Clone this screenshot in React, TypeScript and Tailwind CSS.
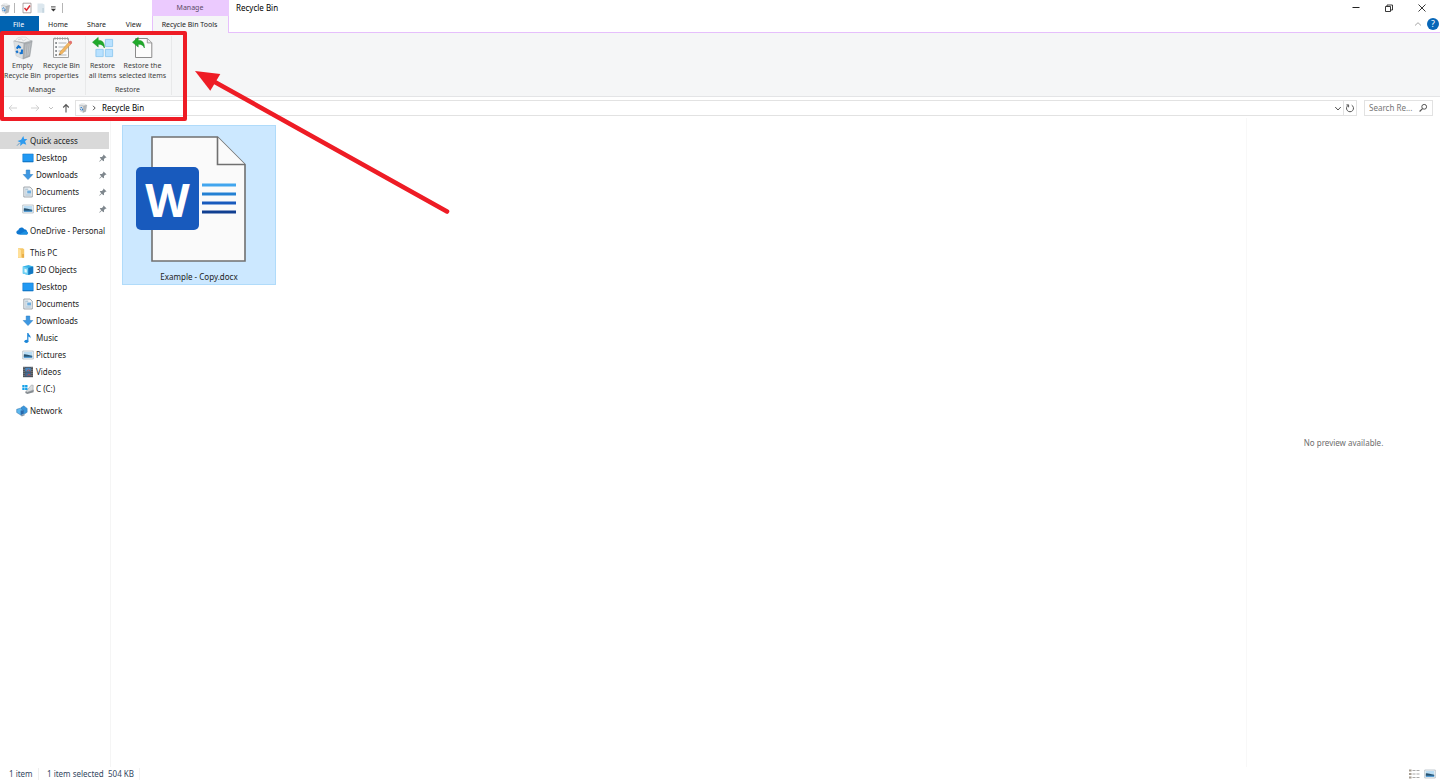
import type { ReactNode } from "react";

type IconProps = { className?: string };

function BinIcon({ className = "size-6" }: IconProps) {
  return (
    <svg viewBox="0 0 24 24" className={className} aria-hidden="true">
      <path d="M2.600 5 13 7.500 12 23l-7-3.200z" fill="#dde0e2" stroke="#c3c7ca" strokeWidth=".5" />
      <path d="M13 7.500 21.200 4.800 18.800 20.400 12 23z" fill="#a9adb1" stroke="#93989c" strokeWidth=".5" />
      <path d="M2.600 5 9 2.600l12.200 2.200L13 7.500z" fill="#92979b" />
      <path d="m4 5 2.600-3.200L11 .9l4 .3 4.500 3.700-6.200 1.600z" fill="#f2f3f4" stroke="#c5c8cb" strokeWidth=".5" />
      <path d="m7 3.800 3.500-1 1.800 2.200 3-1.800" fill="none" stroke="#c5c9cc" strokeWidth=".7" />
      <path d="m15 8.500-.9 12.500M17.200 7.800l-1.200 12.300M19.200 7.200l-1.600 12" stroke="#cfd2d4" strokeWidth=".6" />
      <path
        d="m5.700 12.600 1.800-2.300 2.200 1.700M11 13.500l-.2 3.500-2.200.3M6.700 16.900l-1.300-2.200"
        fill="none"
        stroke="#1272cf"
        strokeWidth="2.100"
      />
    </svg>
  );
}

function PropertiesIcon() {
  return (
    <svg viewBox="0 0 24 24" className="size-6" aria-hidden="true">
      <path d="M3.500 2.500h15v19h-15z" fill="#fafafa" stroke="#a3a3a3" />
      <path d="M5 1.200v2.600M7.500 1.200v2.600M10 1.200v2.600M12.500 1.200v2.600M15 1.200v2.600M17.500 1.200v2.600" stroke="#9a9a9a" strokeWidth=".8" />
      <path d="M8.500 7h8M8.500 11h8M8.500 15h8M8.500 19h8" stroke="#aeb4b8" strokeWidth="1.100" />
      <path d="M5.200 7h1.800M5.200 11h1.800M5.200 15h1.800M5.200 19h1.800" stroke="#6d7377" strokeWidth="1.700" />
      <path d="m9.200 19 1-3.200L19.500 5.400l2.100 1.900-9.300 10.300z" fill="#f2b660" stroke="#c98d3c" strokeWidth=".5" />
      <path d="m18.500 6.500 1.300-1.500c1-.9 3 .8 2.100 1.900l-1.300 1.500z" fill="#e37272" />
      <path d="m9.200 19 .5-1.600 1.100 1z" fill="#484848" />
    </svg>
  );
}

const undoPath = "M0.500 5.200 6.200.4v2.800c4 .1 6.400 2.300 6.200 7.800-1.200-2.800-2.900-3.900-6.200-3.800v2.900z";

function RestoreAllIcon() {
  return (
    <svg viewBox="0 0 24 24" className="size-6" aria-hidden="true">
      <path
        d="M14.400 3.400h7.200v7.200h-7.200zM4.900 13.400h7.300v7.200H4.900zM14.400 13.400h7.200v7.200h-7.200z"
        fill="#b8e1ff"
        stroke="#86c4ee"
        strokeWidth=".8"
      />
      <path d={undoPath} transform="translate(1 1)" fill="#21aa2b" stroke="#138c20" strokeWidth=".5" />
    </svg>
  );
}

function RestoreSelectedIcon() {
  return (
    <svg viewBox="0 0 24 24" className="size-6" aria-hidden="true">
      <path d="M4.500 2.500h12l4.300 4.200v14.800H4.500z" fill="#fcfcfc" stroke="#8b8b8b" />
      <path d="M16.300 2.500v4.400h4.500" fill="#eee" stroke="#8b8b8b" strokeWidth=".8" />
      <path d={undoPath} transform="translate(1 1)" fill="#21aa2b" stroke="#138c20" strokeWidth=".5" />
    </svg>
  );
}

function StarIcon() {
  return (
    <svg viewBox="0 0 12 12" className="size-3" aria-hidden="true">
      <path d="m7.300 1 .9 3.100 3.200-.1-2.400 2.300 1.300 3.500-3.300-1.300-2.800 2.600.2-3.500L1.500 6l3.600-1.200z" fill="#2f9bee" />
      <path d="M1 10.700 3.600 8" stroke="#6f9dc0" />
    </svg>
  );
}

function DesktopIcon() {
  return (
    <svg viewBox="0 0 12 12" className="size-3" aria-hidden="true">
      <path d="M.8 2h10.400v8H.8z" fill="#2199f3" stroke="#1479ca" strokeWidth=".6" />
      <path d="M1 9.500h10" stroke="#0b6cb9" strokeWidth=".6" />
    </svg>
  );
}

function DownloadIcon() {
  return (
    <svg viewBox="0 0 12 12" className="size-3" aria-hidden="true">
      <path d="M4.200 1h3.600v4.500h3L6 10.600 1.200 5.500h3z" fill="#3c97e2" stroke="#1f76bf" strokeWidth=".5" />
    </svg>
  );
}

function DocumentIcon() {
  return (
    <svg viewBox="0 0 12 12" className="size-3" aria-hidden="true">
      <path d="M1.800 1h6.200l2.300 2.200V11H1.800z" fill="#edf1f4" stroke="#8d969d" strokeWidth=".8" />
      <path d="M3.200 3.200h3M3.200 5h1.400M3.200 7h1.400M3.200 9h5.600" stroke="#88a9c2" strokeWidth=".8" />
      <path d="M5.200 4.500H9v3H5.200z" fill="#6faede" />
    </svg>
  );
}

function PictureIcon() {
  return (
    <svg viewBox="0 0 12 12" className="size-3" aria-hidden="true">
      <path d="M.7 2h10.600v8H.7z" fill="#f5f8fa" stroke="#9caab4" strokeWidth=".6" />
      <path d="M1.800 3h8.400v5.800H1.800z" fill="#b9ddf5" />
      <path d="M1.800 5.400c2-.6 3.900.9 8.400 1.400v1.200H1.800z" fill="#28526f" />
      <path d="M1.800 7.600h8.400v1.200H1.800z" fill="#3d8dca" />
    </svg>
  );
}

function CloudIcon() {
  return (
    <svg viewBox="0 0 12 12" className="size-3" aria-hidden="true">
      <path d="M3 9.600C-.3 9.600-.5 5.600 2.300 5.200 3 2.300 6.600 1.400 8.300 4.200c2 .1 2.600 1.400 2.700 2.200 1.500.9.9 3.200-.8 3.200z" fill="#0f77d0" />
      <path d="m3.200 9.600 5-3.200c1-.5 2.300-.2 2.800.3 1.300.8.8 2.900-.8 2.900z" fill="#1c8fe0" />
    </svg>
  );
}

function PcIcon() {
  return (
    <svg viewBox="0 0 12 12" className="size-3" aria-hidden="true">
      <path d="M2 1.200h4.800l1.400 1v8.600H2z" fill="#f6c869" />
      <path d="M2 1.200 5 3v8l-3-1z" fill="#ffe09a" />
      <path d="M6.300 7h1.500v3.800H6.300z" fill="#e4a63f" />
    </svg>
  );
}

function CubeIcon() {
  return (
    <svg viewBox="0 0 12 12" className="size-3" aria-hidden="true">
      <path d="M.8 2.600 6.500 1l4.700 1.500v6.800L6.300 11 .8 9.500z" fill="#38b3e8" />
      <path d="m.8 2.600 5.500 1.500V11L.8 9.500z" fill="#6fd0f3" />
      <path d="M6.300 4.100 11.200 2.500v6.800L6.300 11z" fill="#1478c2" />
      <path d="m2.500 4.800 2.300.6v3.400l-2.300-.6z" fill="#e6faff" />
    </svg>
  );
}

function MusicIcon() {
  return (
    <svg viewBox="0 0 12 12" className="size-3" aria-hidden="true">
      <ellipse cx="4.400" cy="9.300" rx="2" ry="1.600" fill="#1c86d8" />
      <path d="M5.200 9.200V1h1.200c.2 1.800 2.900 2.300 2 5.600-.2-1.400-1-2-2-2.200v4.800z" fill="#1c86d8" />
    </svg>
  );
}

function VideoIcon() {
  return (
    <svg viewBox="0 0 12 12" className="size-3" aria-hidden="true">
      <path d="M1 .8h10v10.400H1z" fill="#46494e" />
      <path d="M2 1.200v9.800M10 1.200v9.800" stroke="#a9acb0" strokeDasharray="1 1" />
      <path d="M3.200 1.600h5.600v4H3.200z" fill="#4c87bd" />
      <path d="M3.200 6.400h5.600v4H3.200z" fill="#466a92" />
      <path d="m5 5.200 1.500-1.500 1.800 1.500M5.500 9.800 7 8l1.300 1.800" fill="none" stroke="#b84e48" />
    </svg>
  );
}

function DriveIcon() {
  return (
    <svg viewBox="0 0 12 12" className="size-3" aria-hidden="true">
      <path d="M3.500 8.500 10.800 6l.8 1.200v2L5.300 11l-2-1z" fill="#858b90" />
      <path d="M4 8.500 9.400 2l1.800.3-.2 4.900-5.700 2z" fill="#d9dcde" stroke="#8e9499" strokeWidth=".5" />
      <path d="M.3 2h2.300v2.200H.3zM3.100 2h2.400v2.200H3.100zM.3 4.700h2.300v2.200H.3zM3.100 4.700h2.400v2.200H3.100z" fill="#16a1e9" />
    </svg>
  );
}

function NetworkIcon() {
  return (
    <svg viewBox="0 0 12 12" className="size-3" aria-hidden="true">
      <path d="m5 2.500 2.800-1.700 3.400 2.600v3.800L8.500 9 5 6.800z" fill="#3b96db" stroke="#2d73ac" strokeWidth=".4" />
      <path d="m.7 4.300 3.600-1.100 3.200 2v3.600L4.700 10 .7 7.500z" fill="#5db8ef" stroke="#2c6fa8" strokeWidth=".5" />
      <path d="m4.500 10.400 3.200-1.300 1.400.8-3.200 1.500z" fill="#7f94a8" />
      <path d="m4.600 5.500 2.900-.3v3.600L4.700 10z" fill="#2a69ac" />
    </svg>
  );
}

function PinIcon() {
  return (
    <svg viewBox="0 0 10 10" className="size-2" aria-hidden="true">
      <path d="m5.700.5 3.800 3.800-1.100.5-.5-.1-1.700 1.700.1 1.900-.9.700-1.900-1.900L.8 9.700l-.5-.5 2.600-2.700L1 4.600l.7-.9 1.900.1 1.700-1.700-.1-.5z" fill="#7f878d" />
    </svg>
  );
}

type NavEntry = { label: string; icon: ReactNode; pinned?: boolean };
type NavGroup = { head: NavEntry; children: NavEntry[]; selected?: boolean };

const navGroups: NavGroup[] = [
  {
    head: { label: "Quick access", icon: <StarIcon /> },
    selected: true,
    children: [
      { label: "Desktop", icon: <DesktopIcon />, pinned: true },
      { label: "Downloads", icon: <DownloadIcon />, pinned: true },
      { label: "Documents", icon: <DocumentIcon />, pinned: true },
      { label: "Pictures", icon: <PictureIcon />, pinned: true },
    ],
  },
  { head: { label: "OneDrive - Personal", icon: <CloudIcon /> }, children: [] },
  {
    head: { label: "This PC", icon: <PcIcon /> },
    children: [
      { label: "3D Objects", icon: <CubeIcon /> },
      { label: "Desktop", icon: <DesktopIcon /> },
      { label: "Documents", icon: <DocumentIcon /> },
      { label: "Downloads", icon: <DownloadIcon /> },
      { label: "Music", icon: <MusicIcon /> },
      { label: "Pictures", icon: <PictureIcon /> },
      { label: "Videos", icon: <VideoIcon /> },
      { label: "C (C:)", icon: <DriveIcon /> },
    ],
  },
  { head: { label: "Network", icon: <NetworkIcon /> }, children: [] },
];

function NavigationPane() {
  return (
    <nav aria-label="Folders" className="flex w-[111px] shrink-0 flex-col gap-[5px] border-r border-[#f5f5f5] pt-3.5 pr-px">
      {navGroups.map((group) => (
        <ul key={group.head.label}>
          <li>
            <button
              type="button"
              className={
                group.selected
                  ? "flex h-[17px] w-full items-center gap-0.5 bg-[#d9d9d9] pl-4 whitespace-nowrap"
                  : "flex h-[17px] w-full items-center gap-0.5 pl-4 whitespace-nowrap"
              }
            >
              {group.head.icon}
              {group.head.label}
            </button>
          </li>
          {group.children.map((item) => (
            <li key={item.label}>
              <button type="button" className="flex h-[17px] w-full items-center gap-0.5 pr-0.5 pl-[22px] whitespace-nowrap">
                {item.icon}
                <span className="flex-1 text-left">{item.label}</span>
                {item.pinned && <PinIcon />}
              </button>
            </li>
          ))}
        </ul>
      ))}
    </nav>
  );
}

function TitleBar() {
  return (
    <header className="flex h-[33px] shrink-0 bg-white">
      <div className="flex w-[152px] flex-col">
        <div className="flex h-4 items-center">
          <BinIcon className="size-[11px]" />
          <span className="ml-[3px] h-2.5 w-px bg-[#b5b5b5]" />
          <button type="button" aria-label="Properties" className="ml-1.5">
            <svg viewBox="0 0 12 12" className="size-3">
              <path d="M2 1.200h8v9.600H2z" fill="#fff" stroke="#9b8d8d" strokeWidth=".8" />
              <path d="m3.500 6 2 2.200L9 3.500" fill="none" stroke="#dc2f36" strokeWidth="1.500" />
            </svg>
          </button>
          <button type="button" aria-label="New folder" className="ml-0.5">
            <svg viewBox="0 0 12 12" className="size-3">
              <path d="M2.500 1.500h5l2 1v8.300h-7z" fill="#dce7ee" />
              <path d="M7.300 6h1.600v4.800H7.300z" fill="#c3d4de" />
            </svg>
          </button>
          <button type="button" aria-label="Customize toolbar" className="ml-px">
            <svg viewBox="0 0 10 10" className="size-2.5">
              <path d="M3 3.900h4.600" stroke="#444" />
              <path d="M2.800 5.800H8L5.400 8.500z" fill="#333" />
            </svg>
          </button>
          <span className="ml-1 h-2.5 w-px bg-[#b5b5b5]" />
        </div>
        <div className="flex h-[17px] items-center text-[7px] leading-4">
          <button type="button" className="h-[17px] w-[39px] bg-[#0063b1] pr-0.5 text-white">
            File
          </button>
          <button type="button" className="w-[38px]">Home</button>
          <button type="button" className="w-[39px]">Share</button>
          <button type="button" className="flex-1 pr-px">View</button>
        </div>
      </div>
      <div className="flex w-[77px] flex-col text-center text-[7px]">
        <div className="h-4 bg-[#ebcafe] pr-px leading-4 text-[#5b4a66]">Manage</div>
        <button type="button" className="h-[17px] border-x border-[#e6bffc] bg-[#f5f6f7] pr-0.5 leading-4 whitespace-nowrap">
          Recycle Bin Tools
        </button>
      </div>
      <div className="flex flex-1 items-start justify-between border-b border-[#e6bffc]">
        <h1 className="pl-[7px] leading-4 text-black">Recycle Bin</h1>
        <div className="flex flex-col items-end">
          <div className="flex h-4 items-center gap-[21px] pr-3">
            <button type="button" aria-label="Minimize">
              <svg viewBox="0 0 12 12" className="size-3">
                <path d="M2.500 5.500h7" stroke="#222" />
              </svg>
            </button>
            <button type="button" aria-label="Restore">
              <svg viewBox="0 0 12 12" className="size-3">
                <path d="M2.500 4.500h5v5h-5zM4 4.500V3h5.500v5H7.500" fill="none" stroke="#222" strokeWidth=".9" />
              </svg>
            </button>
            <button type="button" aria-label="Close">
              <svg viewBox="0 0 12 12" className="size-3">
                <path d="m2.500 2.500 7 7m0-7-7 7" stroke="#222" strokeWidth=".9" />
              </svg>
            </button>
          </div>
          <div className="flex h-4 items-center gap-1 pr-px">
            <button type="button" aria-label="Collapse ribbon">
              <svg viewBox="0 0 10 10" className="size-2.5">
                <path d="M2 6.500 5 3.700l3 2.800" fill="none" stroke="#a7a7a7" />
              </svg>
            </button>
            <button type="button" aria-label="Help" className="size-3 rounded-full bg-[#0867b8] text-center text-[9px] leading-3 text-white">
              ?
            </button>
          </div>
        </div>
      </div>
    </header>
  );
}

function RibbonButton({ icon, lines, width }: { icon: ReactNode; lines: [string, string]; width: string }) {
  return (
    <button type="button" className={`flex ${width} flex-col items-center whitespace-nowrap`}>
      {icon}
      <span className="mt-px leading-[10px]">
        {lines[0]}
        <br />
        {lines[1]}
      </span>
    </button>
  );
}

function Ribbon() {
  return (
    <section aria-label="Ribbon" className="flex h-16 shrink-0 border-b border-[#e3e4e6] bg-[#f5f6f7] pt-[3px] pb-px text-[7px] text-[#3c3c3c]">
      <div className="flex w-[86px] flex-col justify-between border-r border-[#e8e9ea]">
        <div className="flex pl-[3px]">
          <RibbonButton icon={<BinIcon />} lines={["Empty", "Recycle Bin"]} width="w-[39px]" />
          <RibbonButton icon={<PropertiesIcon />} lines={["Recycle Bin", "properties"]} width="w-[39px]" />
        </div>
        <span className="pr-px text-center leading-[10px]">Manage</span>
      </div>
      <div className="flex w-[86px] flex-col justify-between border-r border-[#e8e9ea]">
        <div className="flex pl-px">
          <RibbonButton icon={<RestoreAllIcon />} lines={["Restore", "all items"]} width="w-[31px]" />
          <RibbonButton icon={<RestoreSelectedIcon />} lines={["Restore the", "selected items"]} width="w-[49px]" />
        </div>
        <span className="pr-0.5 text-center leading-[10px]">Restore</span>
      </div>
    </section>
  );
}

function AddressRow() {
  return (
    <div className="flex h-[21px] shrink-0 items-center pt-px pr-[7px] pl-[7px]">
      <button type="button" aria-label="Back">
        <svg viewBox="0 0 12 12" className="size-3">
          <path d="M10 6H2m3.200-3L2 6l3.200 3" fill="none" stroke="#ccc" strokeWidth=".9" />
        </svg>
      </button>
      <button type="button" aria-label="Forward" className="ml-2.5">
        <svg viewBox="0 0 12 12" className="size-3">
          <path d="M2 6h8M6.800 3 10 6 6.800 9" fill="none" stroke="#ccc" strokeWidth=".9" />
        </svg>
      </button>
      <button type="button" aria-label="Recent locations" className="ml-1.5">
        <svg viewBox="0 0 8 8" className="size-2">
          <path d="m2 3 2 2 2-2" fill="none" stroke="#bbb" strokeWidth=".9" />
        </svg>
      </button>
      <button type="button" aria-label="Up" className="ml-[5px]">
        <svg viewBox="0 0 12 12" className="size-3">
          <path d="M6 10.500v-8M3.200 5.500 6 2.500l2.800 3" fill="none" stroke="#555" strokeWidth="1.100" />
        </svg>
      </button>
      <div className="ml-[3px] flex h-4 flex-1 items-center border border-[#e2e2e2] bg-white pl-0.5">
        <BinIcon className="size-2.5" />
        <svg viewBox="0 0 8 8" className="ml-0.5 size-2" aria-hidden="true">
          <path d="m3 1.800 2.200 2.200L3 6.200" fill="none" stroke="#555" />
        </svg>
        <a href="#recycle-bin" className="ml-1 flex-1 text-black">
          Recycle Bin
        </a>
        <button type="button" aria-label="Previous locations">
          <svg viewBox="0 0 10 10" className="size-2.5">
            <path d="m2.200 4 2.800 3 2.800-3" fill="none" stroke="#555" />
          </svg>
        </button>
        <button type="button" aria-label="Refresh" className="flex h-full w-[13px] items-center justify-center border-l border-[#e2e2e2]">
          <svg viewBox="0 0 10 10" className="size-2.5">
            <path d="M6.700 2.200A3.500 3.500 0 1 1 3.300 2.200M3.600 4.300V1.900H1.400" fill="none" stroke="#555" />
          </svg>
        </button>
      </div>
      <label className="ml-[7px] flex h-4 w-[69px] items-center border border-[#e2e2e2] pr-1 pl-1">
        <input type="text" aria-label="Search Recycle Bin" placeholder="Search Re..." className="w-full min-w-0 flex-1 outline-none placeholder:text-[#767676]" />
        <svg viewBox="0 0 10 10" className="size-2.5 shrink-0" aria-hidden="true">
          <circle cx="6.200" cy="3.800" r="2.400" fill="none" stroke="#555" />
          <path d="M4.500 5.600 1.600 8.500" stroke="#555" strokeWidth="1.200" />
        </svg>
      </label>
    </div>
  );
}

function WordFileIcon() {
  return (
    <div className="relative h-[126px] w-[126px]">
      <svg viewBox="0 0 126 126" className="size-full" aria-hidden="true">
        <path d="M16 1h65.500L109 28.500V125H16z" fill="#fafafa" stroke="#707070" strokeWidth="1.600" />
        <path d="M81.500 1v27.500H109" fill="#fafafa" stroke="#707070" strokeWidth="1.600" />
        <g strokeWidth="3.200">
          <path d="M66 49h34" stroke="#41a5ee" />
          <path d="M66 58h34" stroke="#2380d3" />
          <path d="M66 67h34" stroke="#185abd" />
          <path d="M66 76h34" stroke="#103f91" />
        </g>
      </svg>
      <span className="absolute top-[31px] left-0 flex size-[63px] items-center justify-center rounded-[5px] bg-[#185abd] font-['Open_Sans','Noto_Sans',sans-serif] text-[46px] leading-none font-bold text-white">
        W
      </span>
    </div>
  );
}

function StatusBar() {
  return (
    <footer className="flex h-[13px] shrink-0 items-center justify-between pr-1 pl-[9px] text-[#33475f]">
      <div className="flex items-center">
        <span className="w-[30px] border-r border-[#eee]">1 item</span>
        <span className="w-[61px] pl-2 whitespace-nowrap">1 item selected</span>
        <span className="w-10 border-r border-[#f2f2f2] pl-2 whitespace-nowrap">504 KB</span>
      </div>
      <div className="flex items-center gap-1">
        <button type="button" aria-label="Details view">
          <svg viewBox="0 0 12 12" className="size-3">
            <path d="M1 2.500h2.500M1 6h2.500M1 9.500h2.500" stroke="#a59c90" strokeWidth="2" />
            <path d="M4.500 2.500h3M4.500 6h3M4.500 9.500h3M8.500 2.500h3M8.500 6h3M8.500 9.500h3" stroke="#aaa" />
          </svg>
        </button>
        <button type="button" aria-label="Large icons view">
          <PictureIcon />
        </button>
      </div>
    </footer>
  );
}

function Callout() {
  return (
    <div aria-hidden="true" className="pointer-events-none absolute top-[31px] left-0 flex items-start">
      <div className="h-[90px] w-[187px] rounded-[2px] border-4 border-[#ee1c25]" />
      <svg viewBox="187 31 270 190" className="h-[190px] w-[270px]">
        <path d="M213 81 447 211.500" stroke="#ee1c25" strokeWidth="4.600" strokeLinecap="round" />
        <path d="m195 71 25.300 3-10 16.800z" fill="#ee1c25" />
      </svg>
    </div>
  );
}

export default function App() {
  return (
    <div className="relative flex h-screen flex-col overflow-hidden bg-white font-['Noto_Sans','Open_Sans',sans-serif] text-[8px] leading-3 text-[#222]">
      <TitleBar />
      <Ribbon />
      <AddressRow />
      <div className="flex min-h-0 flex-1">
        <NavigationPane />
        <main className="flex-1 pt-[7px] pl-[11px]">
          <button type="button" className="flex h-40 w-[154px] flex-col items-center border border-[#b0dbfa] bg-[#cce8ff] pt-2.5">
            <WordFileIcon />
            <span className="mt-[9px]">Example - Copy.docx</span>
          </button>
        </main>
        <aside className="flex w-[194px] items-center justify-center border-l border-[#f8f8f8] text-[#6d6d6d]">
          No preview available.
        </aside>
      </div>
      <StatusBar />
      <Callout />
    </div>
  );
}
